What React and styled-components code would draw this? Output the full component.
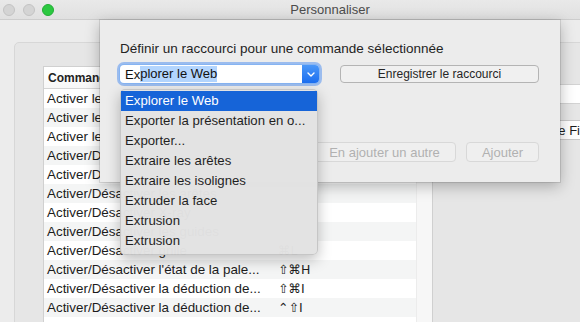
import styled, { createGlobalStyle } from 'styled-components';

const GlobalStyle = createGlobalStyle`
  html, body {
    margin: 0;
    padding: 0;
    background: #ececec;
  }
  body {
    font-family: "Liberation Sans", Arial, sans-serif;
    color: #1e1e1e;
  }
`;

const Window = styled.div`
  position: relative;
  width: 580px;
  height: 322px;
  overflow: hidden;
  background: #ececec;
  display: flex;
  flex-direction: column;
`;

const TitleBar = styled.div`
  flex: none;
  width: 660px;
  height: 19px;
  display: grid;
  grid-template-columns: 60px 1fr 60px;
  align-items: center;
  background: linear-gradient(#e9e9e9, #e0e0e0);
  border-bottom: 1px solid #cdcdcd;
`;

const Lights = styled.div`
  display: flex;
  gap: 7.5px;
  padding-left: 3px;
`;

const Light = styled.span`
  width: 12px;
  height: 12px;
  box-sizing: border-box;
  border-radius: 50%;
  background: ${(p) => p.$fill};
  border: 1px solid ${(p) => p.$rim};
`;

const Title = styled.div`
  text-align: center;
  font-size: 13px;
  color: #4c4c4c;
`;

const Body = styled.div`
  flex: 1;
  min-height: 0;
  display: flex;
  padding: 22px 0 0 14px;
`;

const GroupBox = styled.div`
  flex: 1;
  display: flex;
  align-items: flex-start;
  margin: 0 -10px -10px 0;
  padding: 23px 0 0 28px;
  background: #e6e6e6;
  border: 1px solid #d7d7d7;
  border-radius: 5px;
`;

const TableView = styled.div`
  flex: none;
  width: 390px;
  height: 300px;
  box-sizing: border-box;
  display: flex;
  background: #fff;
  border: 1px solid #d0d0d0;
`;

const Table = styled.div`
  flex: 1;
  min-width: 0;
`;

const Gutter = styled.div`
  width: 15px;
  background: #f7f7f7;
  border-left: 1px solid #ececec;
`;

const HeaderRow = styled.div`
  height: 21px;
  display: flex;
  align-items: center;
  padding-left: 4px;
  background: linear-gradient(#ffffff, #f7f7f7);
  border-bottom: 1px solid #d5d5d5;
  font-size: 12px;
  font-weight: bold;
  color: #222;
`;

const HeaderCell = styled.div`
  width: ${(p) => p.$w}px;
`;

const Row = styled.div`
  height: 19px;
  display: flex;
  align-items: center;
  background: ${(p) => (p.$odd ? '#f4f5f5' : '#ffffff')};
  font-size: 13.4px;
  color: #1c1c1c;
`;

const NameCell = styled.div`
  width: 229px;
  padding-left: 3px;
  white-space: nowrap;
  overflow: hidden;
`;

const KeyCell = styled.div`
  flex: 1;
  padding-left: 2px;
  white-space: nowrap;
  font-family: "DejaVu Sans", "Liberation Sans", sans-serif;
  font-size: 12.5px;
`;

const SidePane = styled.div`
  flex: 1;
  display: flex;
  flex-direction: column;
`;

const Strip = styled.div`
  margin: 18px 0 0 12px;
  height: 18px;
  background: #fff;
  border-top: 1px solid #d3d3d3;
  border-bottom: 1px solid #d3d3d3;
`;

const Field = styled.div`
  margin: 16px 0 0 82px;
  height: 18px;
  display: flex;
  align-items: center;
  padding-left: 4px;
  background: #fff;
  border: 1px solid #c9c9c9;
  font-size: 13px;
  white-space: nowrap;
`;

const Sheet = styled.div`
  position: absolute;
  left: 100px;
  top: 20px;
  width: 460px;
  height: 162px;
  box-sizing: border-box;
  display: flex;
  flex-direction: column;
  padding: 21px 20px 20px 20px;
  background: #ececec;
  box-shadow: 0 4px 14px rgba(0, 0, 0, 0.28), 0 0 0 1px rgba(0, 0, 0, 0.1);
`;

const Label = styled.div`
  font-size: 13.5px;
  line-height: 16px;
  color: #232323;
`;

const FieldRow = styled.div`
  display: flex;
  align-items: center;
  gap: 21px;
  margin-top: 8px;
`;

const Combo = styled.div`
  width: 199px;
  height: 18px;
  display: flex;
  border-radius: 4px;
  background: #fff;
  box-shadow: 0 0 0 1px #86b4f2, 0 0 0 3px rgba(90, 150, 240, 0.55);
`;

const ComboText = styled.div`
  flex: 1;
  display: flex;
  align-items: center;
  padding-left: 5px;
  font-size: 13px;
  color: #111;
  white-space: nowrap;
`;

const Selected = styled.span`
  background: #b3d5fe;
  line-height: 16px;
`;

const ChevronButton = styled.div`
  width: 17px;
  display: flex;
  align-items: center;
  justify-content: center;
  border-radius: 0 4px 4px 0;
  background: linear-gradient(#4a97f8, #1b6ef0);
`;

const PushButton = styled.div`
  width: ${(p) => p.$w}px;
  height: ${(p) => p.$h}px;
  box-sizing: border-box;
  display: flex;
  align-items: center;
  justify-content: center;
  border-radius: 4px;
  font-size: ${(p) => (p.$disabled ? 13 : 12)}px;
  color: ${(p) => (p.$disabled ? '#b1b1b1' : '#262626')};
  background: ${(p) => (p.$disabled ? '#efefef' : '#f0f0f0')};
  border: 1px solid ${(p) => (p.$disabled ? '#d8d8d8' : '#b4b4b4')};
`;

const Footer = styled.div`
  margin-top: auto;
  display: flex;
  justify-content: flex-end;
  gap: 10px;
  padding-right: 1px;
`;

const Menu = styled.div`
  position: absolute;
  left: 120px;
  top: 89px;
  width: 198px;
  box-sizing: border-box;
  padding: 1px 0 3px;
  border-radius: 5px;
  background: rgba(226, 226, 226, 0.98);
  border: 1px solid rgba(0, 0, 0, 0.13);
  box-shadow: 0 5px 14px rgba(0, 0, 0, 0.25);
`;

const MenuItem = styled.div`
  height: 20px;
  line-height: 20px;
  padding-left: 4px;
  font-size: 13.2px;
  white-space: nowrap;
  color: ${(p) => (p.$active ? '#fff' : '#1f1f1f')};
  background: ${(p) => (p.$active ? '#1664d8' : 'transparent')};
`;

const rows = [
  { name: 'Activer les calques', key: '' },
  { name: 'Activer les ombres', key: '' },
  { name: 'Activer le brouillard', key: '' },
  { name: "Activer/Désactiver l'axe", key: '' },
  { name: 'Activer/Désactiver le profil', key: '' },
  { name: 'Activer/Désactiver les arêtes', key: '' },
  { name: 'Activer/Désactiver X-ray', key: '' },
  { name: 'Activer/Désactiver les guides', key: '' },
  { name: 'Activer/Désactiver grille', key: '⌘L' },
  { name: "Activer/Désactiver l'état de la pale...", key: '⇧⌘H' },
  { name: 'Activer/Désactiver la déduction de...', key: '⇧⌘I' },
  { name: 'Activer/Désactiver la déduction de...', key: '⌃⇧I' },
  { name: 'Activer/Désactiver le texte', key: '' },
];

const menuItems = [
  'Explorer le Web',
  'Exporter la présentation en o...',
  'Exporter...',
  'Extraire les arêtes',
  'Extraire les isolignes',
  'Extruder la face',
  'Extrusion',
  'Extrusion',
];

const Chevron = () => (
  <svg width="8" height="5" viewBox="0 0 8 5">
    <path d="M1 1 L4 4 L7 1" fill="none" stroke="#fff" strokeWidth="1.4" strokeLinecap="round" strokeLinejoin="round" />
  </svg>
);

export default function App() {
  return (
    <>
      <GlobalStyle />
      <Window>
        <TitleBar>
          <Lights>
            <Light $fill="#d4d4d4" $rim="#c3c3c3" />
            <Light $fill="#d4d4d4" $rim="#c3c3c3" />
            <Light $fill="#2bc840" $rim="#22ad35" />
          </Lights>
          <Title>Personnaliser</Title>
          <span />
        </TitleBar>

        <Body>
          <GroupBox>
            <TableView>
              <Table>
                <HeaderRow>
                  <HeaderCell $w={228}>Commande</HeaderCell>
                  <HeaderCell $w={100}>Raccourcis</HeaderCell>
                </HeaderRow>
                {rows.map((r, i) => (
                  <Row key={i} $odd={i % 2 === 1}>
                    <NameCell>{r.name}</NameCell>
                    <KeyCell>{r.key}</KeyCell>
                  </Row>
                ))}
              </Table>
              <Gutter />
            </TableView>
            <SidePane>
              <Strip />
              <Field>Nom de Fichier</Field>
            </SidePane>
          </GroupBox>
        </Body>

        <Sheet>
          <Label>Définir un raccourci pour une commande sélectionnée</Label>
          <FieldRow>
            <Combo>
              <ComboText>
                Ex<Selected>plorer le Web</Selected>
              </ComboText>
              <ChevronButton>
                <Chevron />
              </ChevronButton>
            </Combo>
            <PushButton $w={199} $h={18}>Enregistrer le raccourci</PushButton>
          </FieldRow>
          <Footer>
            <PushButton $w={143} $h={20} $disabled>En ajouter un autre</PushButton>
            <PushButton $w={73} $h={20} $disabled>Ajouter</PushButton>
          </Footer>
        </Sheet>

        <Menu>
          {menuItems.map((m, i) => (
            <MenuItem key={i} $active={i === 0}>{m}</MenuItem>
          ))}
        </Menu>
      </Window>
    </>
  );
}
